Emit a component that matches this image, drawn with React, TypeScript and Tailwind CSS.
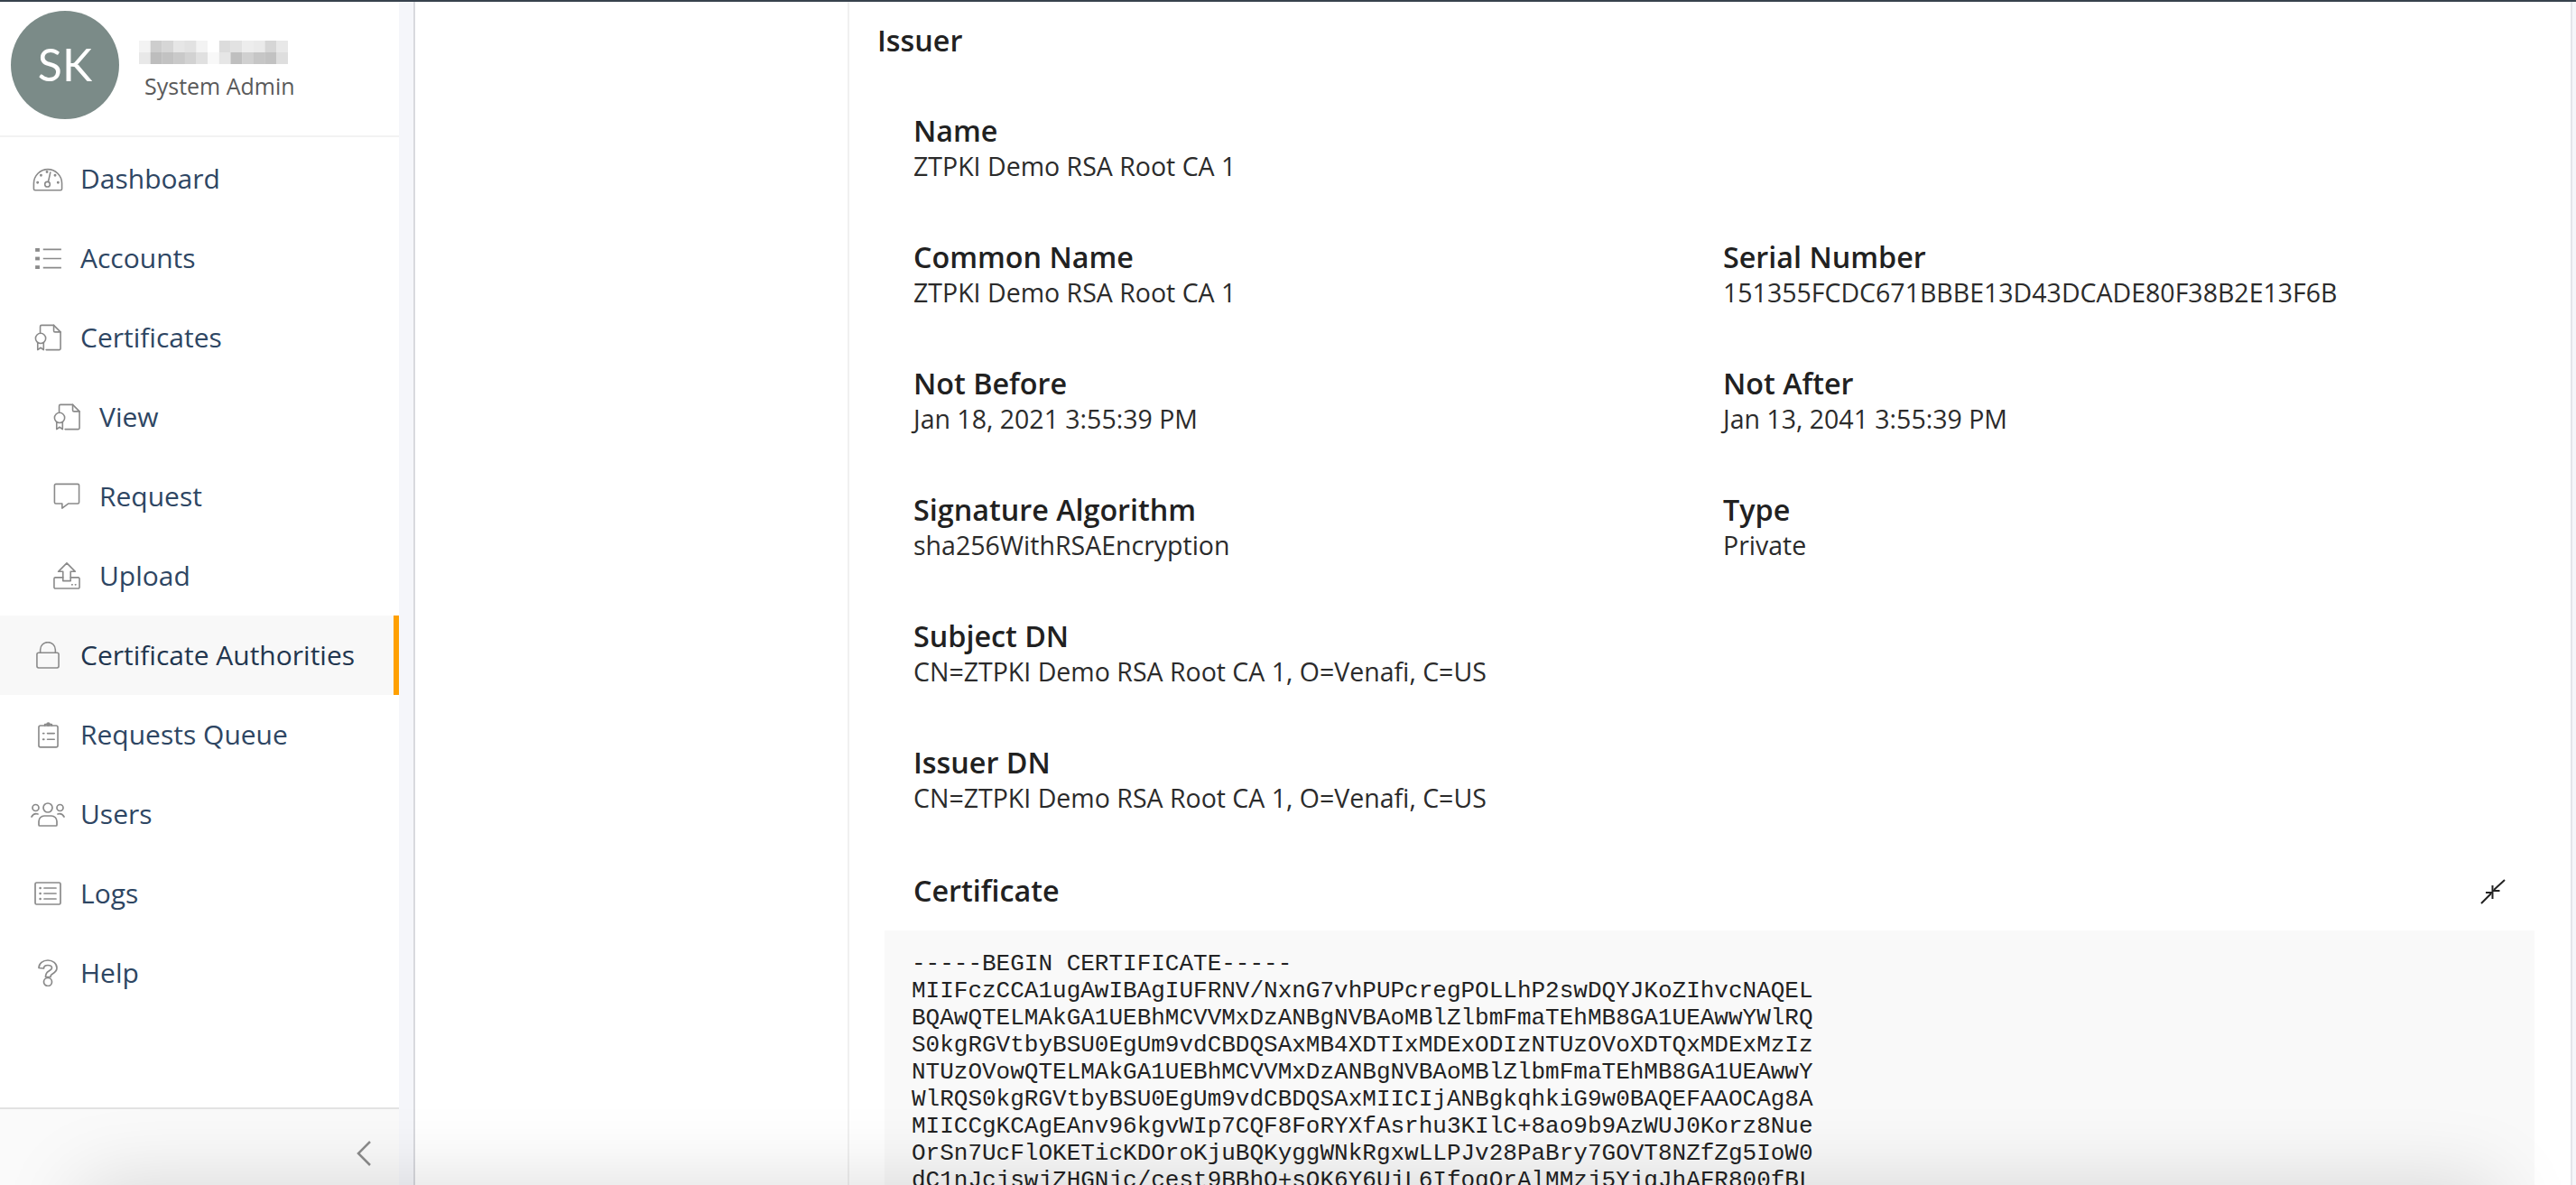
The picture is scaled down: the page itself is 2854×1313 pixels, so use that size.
import React from 'react';

const stroke = { fill: 'none', stroke: 'currentColor', strokeWidth: 1.7, strokeLinecap: 'round', strokeLinejoin: 'round' } as const;

const CertIcon = () => (
  <svg width="30" height="30" viewBox="0 0 32 32" {...stroke}>
    <path d="M7 10V3a1.5 1.5 0 0 1 1.5-1.5H23l8 8V29a1.5 1.5 0 0 1-1.5 1.5H14" />
    <path d="M23 1.500V8a1.500 1.500 0 0 0 1.500 1.500H31" />
    <circle cx="7.500" cy="17" r="6" />
    <path d="M4 22.500V30.500l3.500-2.500 3.500 2.500v-8" />
  </svg>
);

const icons: Record<string, React.ReactNode> = {
  dashboard: (
    <svg width="34" height="27" viewBox="0 0 36 28" {...stroke}>
      <path d="M3 27h30a1.500 1.500 0 0 0 1.500-1.500V19a16.500 16.500 0 0 0-33 0v6.500A1.500 1.500 0 0 0 3 27z" />
      <circle cx="17.500" cy="20" r="3" />
      <path d="M18.500 17l2.500-11" />
      <circle cx="6" cy="18" r=".7" />
      <circle cx="30" cy="18" r=".7" />
      <circle cx="10" cy="9.500" r=".7" />
      <circle cx="26.500" cy="9.500" r=".7" />
      <circle cx="17" cy="5.500" r=".7" />
    </svg>
  ),
  list: (
    <svg width="29" height="23" viewBox="0 0 30 24" fill="none">
      <g fill="currentColor">
        <rect x="0" y="0" width="5" height="4" />
        <rect x="0" y="10" width="5" height="4" />
        <rect x="0" y="20" width="5" height="4" />
      </g>
      <path d="M9 1.500h21M9 12h21M9 22.500h21" stroke="currentColor" strokeWidth="1.700" />
    </svg>
  ),
  cert: <CertIcon />,
  request: (
    <svg width="30" height="30" viewBox="0 0 32 32" {...stroke}>
      <path d="M3 1.500h26A1.500 1.500 0 0 1 30.500 3v20a1.500 1.500 0 0 1-1.500 1.500H18L10.500 30v-5.500H3A1.500 1.500 0 0 1 1.500 23V3A1.500 1.500 0 0 1 3 1.500z" />
    </svg>
  ),
  upload: (
    <svg width="30" height="30" viewBox="0 0 32 32" {...stroke}>
      <path d="M16 1L6 11h5.500v11h9V11H26z" />
      <path d="M11.500 18H2.500A1.500 1.500 0 0 0 1 19.500v10A1.500 1.500 0 0 0 2.500 31h27a1.500 1.500 0 0 0 1.500-1.500v-10a1.500 1.500 0 0 0-1.500-1.500H20.500" />
      <path d="M22 26.500h.6M26 26.500h.6" />
    </svg>
  ),
  lock: (
    <svg width="26" height="30" viewBox="0 0 28 32" {...stroke}>
      <rect x="1" y="13" width="26" height="18" rx="2" />
      <path d="M5 13V9.500a9 9 0 0 1 18 0V13" />
    </svg>
  ),
  queue: (
    <svg width="23" height="29" viewBox="0 0 24 30" {...stroke}>
      <rect x="1" y="4" width="22" height="25" rx="2" />
      <path d="M8 4V2.500h8V4" />
      <circle cx="12" cy="2.500" r="1.500" />
      <path d="M11 13h8M11 20h8" />
      <path d="M6 13h1M6 20h1" strokeWidth="2" />
    </svg>
  ),
  users: (
    <svg width="38" height="27" viewBox="0 0 38 27" {...stroke}>
      <circle cx="19" cy="6" r="5" />
      <circle cx="5.500" cy="6" r="3.500" />
      <circle cx="32.500" cy="6" r="3.500" />
      <path d="M1 16a6 6 0 0 1 7-3M37 16a6 6 0 0 0-7-3" />
      <path d="M9 25v-4a6 6 0 0 1 6-6h8a6 6 0 0 1 6 6v4a1 1 0 0 1-1 1H10a1 1 0 0 1-1-1z" />
    </svg>
  ),
  logs: (
    <svg width="30" height="26" viewBox="0 0 30 26" {...stroke}>
      <rect x="1" y="1" width="28" height="24" rx="1.500" />
      <path d="M11 7h13M11 13h13M11 19h13" />
      <path d="M6.500 7h.2M6.500 13h.2M6.500 19h.2" strokeWidth="2.400" />
    </svg>
  ),
  help: (
    <svg width="22" height="30" viewBox="0 0 22 30" {...stroke}>
      <path d="M1 9.500C1 4.500 5.500 1 11 1s10 3.500 10 8.500c0 4-3 5.500-5.500 7-1.500.9-1.500 2-1.500 3H8.500c0-3 1-5 3.500-6.500 2.500-1.500 3.500-2 3.500-3.500 0-1.800-2-3-4.500-3s-4.500 1.300-4.500 3.500z" />
      <circle cx="11" cy="25" r="4.500" />
    </svg>
  ),
};

const navItems = [
  { label: 'Dashboard', icon: 'dashboard' },
  { label: 'Accounts', icon: 'list' },
  { label: 'Certificates', icon: 'cert' },
  { label: 'View', icon: 'cert', sub: true },
  { label: 'Request', icon: 'request', sub: true },
  { label: 'Upload', icon: 'upload', sub: true },
  { label: 'Certificate Authorities', icon: 'lock', active: true },
  { label: 'Requests Queue', icon: 'queue' },
  { label: 'Users', icon: 'users' },
  { label: 'Logs', icon: 'logs' },
  { label: 'Help', icon: 'help' },
];

const certLines = [
  '-----BEGIN CERTIFICATE-----',
  'MIIFczCCA1ugAwIBAgIUFRNV/NxnG7vhPUPcregPOLLhP2swDQYJKoZIhvcNAQEL',
  'BQAwQTELMAkGA1UEBhMCVVMxDzANBgNVBAoMBlZlbmFmaTEhMB8GA1UEAwwYWlRQ',
  'S0kgRGVtbyBSU0EgUm9vdCBDQSAxMB4XDTIxMDExODIzNTUzOVoXDTQxMDExMzIz',
  'NTUzOVowQTELMAkGA1UEBhMCVVMxDzANBgNVBAoMBlZlbmFmaTEhMB8GA1UEAwwY',
  'WlRQS0kgRGVtbyBSU0EgUm9vdCBDQSAxMIICIjANBgkqhkiG9w0BAQEFAAOCAg8A',
  'MIICCgKCAgEAnv96kgvWIp7CQF8FoRYXfAsrhu3KIlC+8ao9b9AzWUJ0Korz8Nue',
  'OrSn7UcFlOKETicKDOroKjuBQKyggWNkRgxwLLPJv28PaBry7GOVT8NZfZg5IoW0',
  'dC1nJcjswjZHGNjc/cest9BBhO+sOK6Y6UjL6IfogOrAlMMzj5YjgJhAFR800fBL',
];

const mosaic = [
  ['#f3f3f3', '#cdcdcd', '#d6d6d6', '#e6e6e6', '#e2e2e2', '#f3f3f3', '#ffffff', '#dcdcdc', '#e2e2e2', '#ededed', '#eaeaea', '#d6d6d6', '#e8e8e8'],
  ['#e8e8e8', '#bdbdbd', '#c2c2c2', '#c9c9c9', '#d2d2d2', '#e0e0e0', '#f8f8f8', '#e6e6e6', '#bfbfbf', '#d0d0d0', '#c6c6c6', '#c2c2c2', '#dedede'],
];

const Field = ({ label, value }: { label: string; value: string }) => (
  <div className="h-[140px]">
    <div className="text-[32.3px] leading-[35px] font-semibold text-[#212121]">{label}</div>
    <div className="mt-[3px] text-[28.5px] leading-[38px] text-[#2b2b2b]">{value}</div>
  </div>
);

export default function App() {
  return (
    <div className="relative h-screen overflow-hidden flex flex-col bg-white font-['Open_Sans',sans-serif]">
      <div className="h-[2px] shrink-0 bg-[#37424d]" />
      <div className="flex flex-1 min-h-0">
        <aside className="w-[442px] shrink-0 flex flex-col bg-white">
          <div className="h-[150px] shrink-0 flex items-center gap-[28px] pl-[12px] border-b-2 border-[#f2f2f2]">
            <div className="w-[120px] h-[120px] -mt-[9px] rounded-full bg-[#7b8b88] flex items-center justify-center text-white text-[50px] font-['Lato',sans-serif]">
              SK
            </div>
            <div className="flex flex-col pt-[5px]">
              <svg width="165" height="26" viewBox="0 0 13 2" preserveAspectRatio="none" className="-ml-[6px]">
                {mosaic.map((row, y) =>
                  row.map((c, x) => <rect key={`${x}-${y}`} x={x} y={y} width="1.02" height="1.02" fill={c} />)
                )}
              </svg>
              <div className="mt-[7px] text-[25px] leading-[34px] text-[#5a5a5a]">System Admin</div>
            </div>
          </div>
          <nav className="flex-1 pt-[2px]">
            {navItems.map((item) => (
              <div
                key={item.label}
                className={
                  item.active
                    ? 'h-[88px] flex items-center bg-[#f8f8f8] border-r-[6px] border-[#ffa000] text-[#22364f]'
                    : 'h-[88px] flex items-center text-[#2e4663]'
                }
              >
                <div className={item.sub ? 'w-[32px] ml-[58px] mr-[20px] flex justify-center shrink-0 text-[#8a8a8a]' : 'w-[40px] ml-[33px] mr-[16px] flex justify-center shrink-0 text-[#8a8a8a]'}>
                  {icons[item.icon]}
                </div>
                <span className="text-[30px] leading-[40px]">{item.label}</span>
              </div>
            ))}
          </nav>
          <div className="h-[86px] shrink-0 border-t-2 border-[#e2e2e2] bg-[#fafafa] flex justify-end pt-[34px] pr-[30px]">
            <svg width="18" height="30" viewBox="0 0 18 30" fill="none" stroke="#8c8c8c" strokeWidth="2.500">
              <path d="M16 2L3 15l13 13" />
            </svg>
          </div>
        </aside>
        <div className="w-[18px] shrink-0 bg-[#f5f6fa] border-r-2 border-[#d8d9de]" />
        <div className="w-[481px] shrink-0 border-r-2 border-[#f0f0f0]" />
        <main className="flex-1 min-w-0 relative pl-[31px] pr-[46px]">
          <h2 className="h-[86px] pt-[22px] text-[32.3px] leading-[40px] font-semibold text-[#212121]">Issuer</h2>
          <div className="pl-[40px] pt-[39px]">
            <Field label="Name" value="ZTPKI Demo RSA Root CA 1" />
            <div className="grid grid-cols-[897px_1fr]">
              <Field label="Common Name" value="ZTPKI Demo RSA Root CA 1" />
              <Field label="Serial Number" value="151355FCDC671BBBE13D43DCADE80F38B2E13F6B" />
              <Field label="Not Before" value="Jan 18, 2021 3:55:39 PM" />
              <Field label="Not After" value="Jan 13, 2041 3:55:39 PM" />
              <Field label="Signature Algorithm" value="sha256WithRSAEncryption" />
              <Field label="Type" value="Private" />
            </div>
            <Field label="Subject DN" value="CN=ZTPKI Demo RSA Root CA 1, O=Venafi, C=US" />
            <Field label="Issuer DN" value="CN=ZTPKI Demo RSA Root CA 1, O=Venafi, C=US" />
          </div>
          <div className="flex items-center justify-between pl-[40px] pr-[32px] h-[50px] -mt-[6px]">
            <span className="text-[32.3px] leading-[38px] font-semibold text-[#212121]">Certificate</span>
            <svg width="28" height="28" viewBox="0 0 28 28" fill="none" stroke="#222" strokeWidth="2" className="mt-[4px]">
              <path d="M1 27L12 16M27 1L15 12" />
              <path d="M13.500 7v6h8M6 15h7.500v7" />
            </svg>
          </div>
          <pre className="mt-[20px] ml-[8px] bg-[#f9f9f9] pt-[22px] pl-[30px] font-['Liberation_Mono',monospace] text-[26px] leading-[30px] text-[#222]">
            {certLines.join('\n')}
          </pre>
          <div className="absolute right-0 top-0 bottom-0 w-[6px] bg-[#f5f6fa] border-l-2 border-[#e4e5ea]" />
        </main>
      </div>
      {/* soft shadow rising from below the window */}
      <div className="absolute left-[90px] right-[90px] -bottom-[200px] h-[200px] shadow-[0_0_90px_rgba(0,0,0,0.15)] pointer-events-none" />
    </div>
  );
}
